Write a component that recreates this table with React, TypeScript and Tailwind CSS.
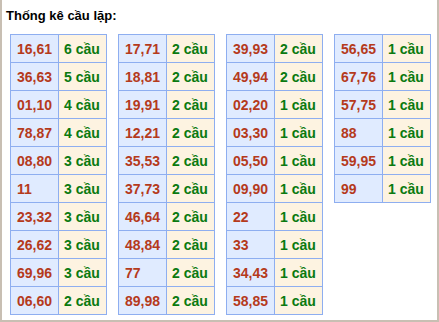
import React from "react";

type Row = [string, number];

const columns: Row[][] = [
  [
    ["16,61", 6],
    ["36,63", 5],
    ["01,10", 4],
    ["78,87", 4],
    ["08,80", 3],
    ["11", 3],
    ["23,32", 3],
    ["26,62", 3],
    ["69,96", 3],
    ["06,60", 2],
  ],
  [
    ["17,71", 2],
    ["18,81", 2],
    ["19,91", 2],
    ["12,21", 2],
    ["35,53", 2],
    ["37,73", 2],
    ["46,64", 2],
    ["48,84", 2],
    ["77", 2],
    ["89,98", 2],
  ],
  [
    ["39,93", 2],
    ["49,94", 2],
    ["02,20", 1],
    ["03,30", 1],
    ["05,50", 1],
    ["09,90", 1],
    ["22", 1],
    ["33", 1],
    ["34,43", 1],
    ["58,85", 1],
  ],
  [
    ["56,65", 1],
    ["67,76", 1],
    ["57,75", 1],
    ["88", 1],
    ["59,95", 1],
    ["99", 1],
  ],
];

function PairTable({ rows }: { rows: Row[] }) {
  return (
    <div className="grid w-[97px] grid-cols-[47px_47px] gap-px self-start border border-[#8eaef0] bg-[#8eaef0]">
      {rows.map(([pair, count]) => (
        <React.Fragment key={pair}>
          <div className="flex h-[27px] items-center bg-[#e0ebff] pl-[6px] text-[#b53a1c]">
            {pair}
          </div>
          <div className="flex h-[27px] items-center bg-[#fdf3e1] pl-[5px] text-[#0a7a10]">
            {count} cầu
          </div>
        </React.Fragment>
      ))}
    </div>
  );
}

export default function App() {
  return (
    <div
      className="h-[322px] w-[439px] border-x-2 border-b-2 border-[#c8bfb3] bg-white text-[14px] font-bold leading-4"
      style={{ fontFamily: '"Liberation Sans", Arial, sans-serif' }}
    >
      <h3 className="pl-1 pt-2 text-[13px] leading-4 text-black">Thống kê cầu lặp:</h3>
      <div className="mt-[10px] flex gap-[11px] pl-2">
        {columns.map((rows, i) => (
          <PairTable key={i} rows={rows} />
        ))}
      </div>
    </div>
  );
}
